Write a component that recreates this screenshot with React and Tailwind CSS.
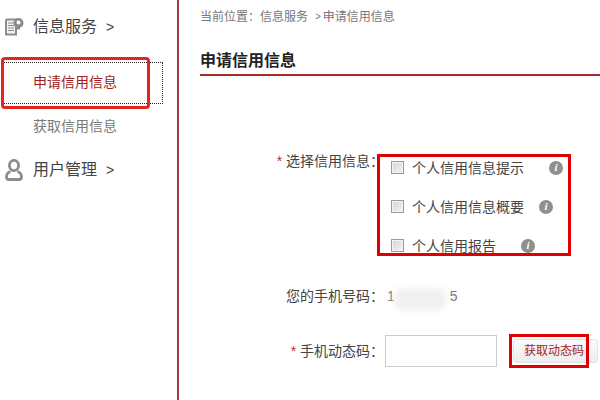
const cjk = "font-['Liberation_Sans','Noto_Sans_CJK_SC',sans-serif]";

function DocIcon() {
  return (
    <svg width="20" height="20" viewBox="0 0 20 20" className="shrink-0">
      <path d="M1 3.500 Q1 1.500 3 1.500H13V18.500H1z" fill="#8c8c8c" />
      <path d="M3 3.500h8v13H3z" fill="#f2f2f2" />
      <path d="M4 6h6M4 8.500h6M4 11h6M4 13.500h6" stroke="#8c8c8c" strokeWidth="1.2" />
      <circle cx="14.500" cy="6" r="5" fill="#8c8c8c" />
      <circle cx="14.500" cy="5.500" r="2" fill="#fff" />
      <path d="M12 10h4v2.500h-4z" fill="#8c8c8c" />
    </svg>
  );
}

function UserIcon() {
  return (
    <svg width="18" height="22" viewBox="0 0 18 22" className="shrink-0">
      <ellipse cx="9" cy="6.500" rx="4.600" ry="5.200" fill="none" stroke="#8c8c8c" strokeWidth="2.800" />
      <path d="M5.500 12.500C2.500 13.500 1.500 15.500 1.500 18c0 1.500 1 2.500 2.500 2.500h10c1.500 0 2.500-1 2.500-2.500 0-2.500-1-4.500-4-5.500" fill="none" stroke="#8c8c8c" strokeWidth="2.800" />
    </svg>
  );
}

function Info() {
  return (
    <span className="flex h-[14px] w-[14px] shrink-0 items-center justify-center rounded-full bg-[#8f8f8f] font-['Liberation_Serif',serif] text-[11px] font-bold italic leading-none text-white">
      i
    </span>
  );
}

function Check({ label, gap }) {
  return (
    <div className="flex h-[39px] items-center">
      <span className="h-[13px] w-[13px] shrink-0 border border-[#999] bg-gradient-to-br from-[#d4d4d4] to-[#f4f4f4] shadow-[inset_0_0_0_1px_#f4f4f4]" />
      <span className="ml-[8px] text-[14px] leading-none text-[#444]">{label}</span>
      <span style={{ marginLeft: gap }}><Info /></span>
    </div>
  );
}

export default function App() {
  return (
    <div className={`${cjk} relative flex h-[400px] w-[600px] overflow-hidden bg-white`}>
      <aside className="h-full w-[179px] shrink-0 border-r-2 border-[#a33a3a] pt-[17px]">
        <div className="flex h-[20px] items-center pl-[4px] text-[16px] text-[#444]">
          <DocIcon />
          <span className="ml-[9px]">信息服务</span>
          <span className="ml-[9px] font-['Liberation_Sans'] text-[14px]">&gt;</span>
        </div>
        <div className="mt-[25px] ml-[2px] flex h-[42px] w-[161px] items-center border border-dotted border-[#222] pb-[1px] pl-[30px] text-[14px] text-[#a32020]">
          <span>申请信用信息</span>
        </div>
        <div className="mt-[12px] pl-[33px] text-[14px] leading-[20px] text-[#7a7a7a]">获取信用信息</div>
        <div className="mt-[23px] flex h-[22px] items-center pl-[5px] text-[16px] text-[#444]">
          <UserIcon />
          <span className="ml-[10px]">用户管理</span>
          <span className="ml-[9px] font-['Liberation_Sans'] text-[14px]">&gt;</span>
        </div>
      </aside>

      <main className="min-w-0 flex-1 pl-[21px] pt-[9px]">
        <div className="flex h-[16px] items-center text-[12px] leading-none text-[#777]">
          <span>当前位置：信息服务</span>
          <span className="ml-[7px] font-['Liberation_Sans'] text-[10px]">&gt;</span>
          <span className="ml-[2px]">申请信用信息</span>
        </div>
        <h1 className="mt-[25px] h-[26px] border-b-2 border-[#a52a2a] text-[16px] font-bold leading-[22px] text-[#222]">
          申请信用信息
        </h1>

        <div className="mt-[70px] flex">
          <div className="w-[184px] shrink-0 pt-[4px] text-right text-[14px] leading-[22px] text-[#444]">
            <span className="text-[#b03030]">* </span>选择信用信息：
          </div>
          <div className="pl-[7px] pt-[2px]">
            <Check label="个人信用信息提示" gap="25px" />
            <Check label="个人信用信息概要" gap="15px" />
            <Check label="个人信用报告" gap="25px" />
          </div>
        </div>

        <div className="mt-[20px] flex h-[22px] items-center">
          <div className="w-[184px] shrink-0 text-right text-[14px] text-[#444]">您的手机号码：</div>
          <span className="ml-[3px] font-['Liberation_Sans'] text-[14px] text-[#777]">1</span>
          <span className="ml-[55px] font-['Liberation_Sans'] text-[14px] text-[#777]">5</span>
        </div>

        <div className="mt-[28px] flex h-[32px] items-center">
          <div className="w-[184px] shrink-0 text-right text-[14px] text-[#444]">
            <span className="text-[#b03030]">* </span>手机动态码：
          </div>
          <div className="ml-[1px] h-[32px] w-[112px] shrink-0 border border-[#ccc] bg-white" />
          <div className="ml-[16px] flex h-[24px] w-[85px] shrink-0 items-center rounded-[3px] border border-[#e4e4e4] bg-gradient-to-b from-[#fafafa] to-[#ececec] pl-[10px] text-[12px] text-[#a32020]">
            获取动态码
          </div>
        </div>
      </main>

      <div className="absolute left-[394px] top-[288px] h-[22px] w-[52px] rounded-[8px] bg-[#f0f0f0] blur-[3px]" />
      <div className="absolute left-[1px] top-[57px] h-[52px] w-[149px] rounded-[4px] border-[3px] border-[#e8231d]" />
      <div className="absolute left-[377px] top-[154px] h-[102px] w-[194px] border-[3px] border-[#e00000]" />
      <div className="absolute left-[509px] top-[334px] h-[34px] w-[80px] border-[3px] border-[#e00000]" />
    </div>
  );
}
